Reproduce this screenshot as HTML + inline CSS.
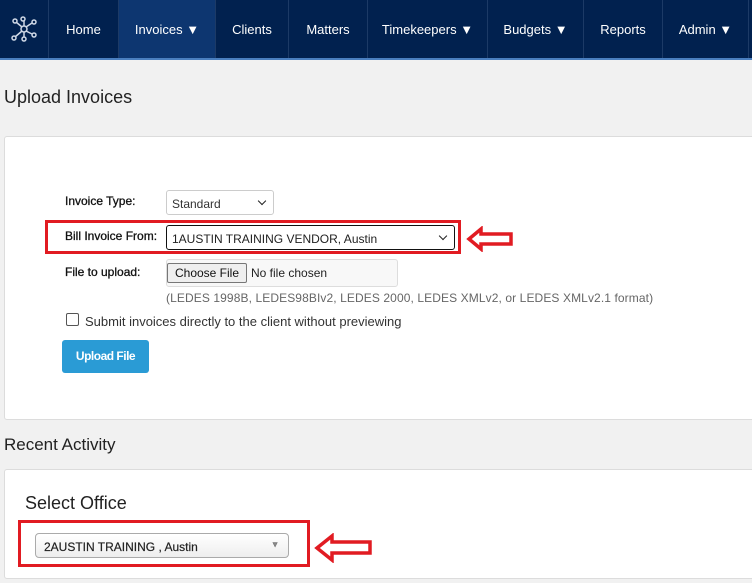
<!DOCTYPE html>
<html><head><style>
*{box-sizing:border-box;margin:0;padding:0}
body{width:752px;height:583px;overflow:hidden;background:#f1f1f1;font-family:"Liberation Sans",Arial,sans-serif;position:relative}
.nav{position:absolute;left:0;top:0;width:752px;background:#01214f;border-bottom:2px solid #4a7fbf;height:60px}
.nav div{position:absolute;top:0;height:58px;line-height:60px;color:#fff;font-size:13px;text-align:center;border-right:1px solid #1c3a66}
.a{position:absolute}
.panel{position:absolute;background:#fff;border:1px solid #dcdcdc;border-radius:3px}
.lbl{position:absolute;font-size:12px;color:#111;-webkit-text-stroke:0.3px #111}
.red{position:absolute;border:3px solid #e11b22}
.chev{position:absolute;right:8px;top:7px;width:6px;height:6px;border-right:1.8px solid #222;border-bottom:1.8px solid #222;transform:rotate(45deg)}
</style></head><body>
<div class="nav">
<div style="left:0;width:49px"><svg width="26" height="26" viewBox="0 0 26 26" style="margin-top:16px" fill="none" stroke="#cfd8e6" stroke-width="1.5"><circle cx="13" cy="13" r="3"/><circle cx="4" cy="5" r="2"/><circle cx="12" cy="3" r="2"/><circle cx="23" cy="6" r="2"/><circle cx="23" cy="19" r="2"/><circle cx="13" cy="23" r="2"/><circle cx="3" cy="22" r="2"/><path d="M11 11L5 6M13 10V5M15 11L21 7M15 15L21 18M13 16V21M11 15L4 21"/></svg></div>
<div style="left:49px;width:70px">Home</div>
<div style="left:119px;width:97px;background:#0d3670">Invoices ▼</div>
<div style="left:216px;width:73px">Clients</div>
<div style="left:289px;width:79px">Matters</div>
<div style="left:368px;width:120px">Timekeepers ▼</div>
<div style="left:488px;width:96px">Budgets ▼</div>
<div style="left:584px;width:79px">Reports</div>
<div style="left:663px;width:86px">Admin ▼</div>
</div>
<div class="a" style="left:4px;top:87px;font-size:18px;color:#222">Upload Invoices</div>
<div class="panel" style="left:4px;top:136px;width:760px;height:284px"></div>
<div class="lbl" style="left:65px;top:194px">Invoice Type:</div>
<div class="a" style="left:166px;top:190px;width:108px;height:25px;border:1px solid #ccc;border-radius:3px;font-size:12px;color:#333;padding:6px 0 0 5px">Standard<span class="chev"></span></div>
<div class="red" style="left:45px;top:220px;width:416px;height:34px"></div>
<div class="lbl" style="left:65px;top:229px">Bill Invoice From:</div>
<div class="a" style="left:166px;top:225px;width:289px;height:25px;border:1px solid #111;border-radius:3px;font-size:12px;color:#222;padding:6px 0 0 5px">1AUSTIN TRAINING VENDOR, Austin<span class="chev"></span></div>
<svg class="a" style="left:466px;top:226px" width="48" height="26" viewBox="0 0 48 26"><path d="M3 13L15 3V8H45V18H15V23Z" fill="#fff" stroke="#e11b22" stroke-width="3.5"/></svg>
<div class="lbl" style="left:65px;top:265px">File to upload:</div>
<div class="a" style="left:166px;top:259px;width:232px;height:28px;border:1px solid #ddd;border-radius:3px;background:#f8f8f8"></div>
<div class="a" style="left:167px;top:263px;width:80px;height:20px;border:1px solid #777;border-radius:2px;background:#efefef;font-size:12px;text-align:center;line-height:18px;color:#111">Choose File</div>
<div class="a" style="left:251px;top:266px;font-size:12px;color:#222">No file chosen</div>
<div class="a" style="left:166px;top:291px;font-size:12px;color:#666;letter-spacing:0.1px">(LEDES 1998B, LEDES98BIv2, LEDES 2000, LEDES XMLv2, or LEDES XMLv2.1 format)</div>
<div class="a" style="left:66px;top:313px;width:13px;height:13px;border:1px solid #555;border-radius:2px"></div>
<div class="a" style="left:85px;top:314px;font-size:13px;color:#333">Submit invoices directly to the client without previewing</div>
<div class="a" style="left:62px;top:340px;width:87px;height:33px;background:#2a9bd5;border-radius:3px;color:#fff;font-size:12px;font-weight:bold;text-align:center;line-height:33px;letter-spacing:-0.5px">Upload File</div>
<div class="a" style="left:4px;top:435px;font-size:17px;color:#222">Recent Activity</div>
<div class="panel" style="left:4px;top:469px;width:760px;height:110px"></div>
<div class="a" style="left:25px;top:493px;font-size:18px;color:#222">Select Office</div>
<div class="red" style="left:18px;top:520px;width:292px;height:47px"></div>
<div class="a" style="left:35px;top:533px;width:254px;height:25px;border:1px solid #aaa;border-radius:4px;background:linear-gradient(#fff,#eee);font-size:12px;color:#222;padding:6px 0 0 8px;-webkit-text-stroke:0.2px #222">2AUSTIN TRAINING , Austin<span style="position:absolute;right:9px;top:6px;font-size:8px;color:#888">▼</span></div>
<svg class="a" style="left:314px;top:533px" width="60" height="30" viewBox="0 0 60 30"><path d="M3 15L18 3V9H56V20H18V27Z" fill="#fff" stroke="#e11b22" stroke-width="3.5"/></svg>
</body></html>
